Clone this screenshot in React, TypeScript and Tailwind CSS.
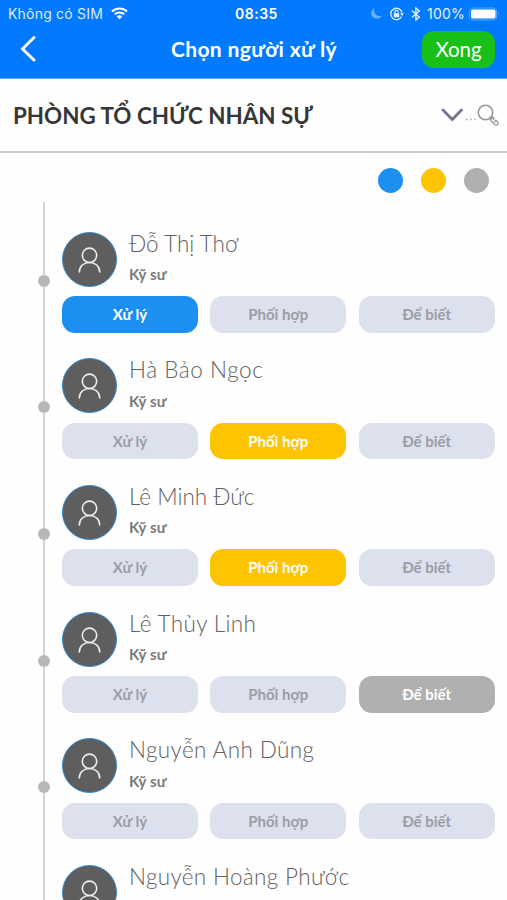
type Role = 'process' | 'combine' | 'notify';

interface Person {
  name: string;
  title?: string;
  role?: Role;
  spacing: string;
}

const people: Person[] = [
  { name: 'Đỗ Thị Thơ', title: 'Kỹ sư', role: 'process', spacing: 'tracking-[0px]' },
  { name: 'Hà Bảo Ngọc', title: 'Kỹ sư', role: 'combine', spacing: 'tracking-[0.55px]' },
  { name: 'Lê Minh Đức', title: 'Kỹ sư', role: 'combine', spacing: 'tracking-[0px]' },
  { name: 'Lê Thùy Linh', title: 'Kỹ sư', role: 'notify', spacing: 'tracking-[0.35px]' },
  { name: 'Nguyễn Anh Dũng', title: 'Kỹ sư', spacing: 'tracking-[0.38px]' },
  { name: 'Nguyễn Hoàng Phước', spacing: 'tracking-[0.33px]' },
];

const options: { id: Role; label: string; active: string }[] = [
  { id: 'process', label: 'Xử lý', active: 'bg-[#1d8ff0] text-white' },
  { id: 'combine', label: 'Phối hợp', active: 'bg-[#fec400] text-white' },
  { id: 'notify', label: 'Để biết', active: 'bg-[#b0b0b0] text-white' },
];

function StatusBar() {
  return (
    <div className="flex h-[27px] items-center text-[14px] leading-none font-['Inter','Noto_Sans',sans-serif]">
      <div className="flex w-[235px] items-center pl-[8px]">
        <span className="w-[96px] whitespace-nowrap text-[14px] tracking-[0.2px] text-[#d8ecff]">Không có SIM</span>
        <svg className="ml-[7px]" width="17" height="13" viewBox="0 0 17 13" fill="none" stroke="#fff" strokeWidth="2.1">
          <path d="M1 4.5C5.2.5 11.8.5 16 4.5M3.8 7.3C6.5 4.8 10.5 4.8 13.2 7.3" />
          <path d="M8.5 12.2L5.7 9.4c1.6-1.5 4-1.5 5.6 0z" fill="#fff" stroke="none" />
        </svg>
      </div>
      <span className="w-[135px] text-[14px] font-semibold tracking-[0.5px]">08:35</span>
      <svg width="13" height="13" viewBox="0 0 13 13" fill="#67b2ff">
        <path d="M4.5 1C1 3 .3 7 2.5 9.7c2.3 2.6 7 2.5 9-.8C7 10 2.800 6 4.500 1z" />
      </svg>
      <svg className="ml-[6px]" width="16" height="14" viewBox="0 0 16 14" fill="none" stroke="#e3f2ff">
        <path d="M12.600 9.500A5.700 5.700 0 1 1 13 5.500" strokeWidth="1.300" />
        <path d="M11 6.300h4l-2 2.700z" fill="#e3f2ff" stroke="none" />
        <path d="M5.900 6.500V5a1.600 1.600 0 0 1 3.200 0v1.500" strokeWidth="1.100" />
        <rect x="4.800" y="6.300" width="5.400" height="3.900" rx=".5" fill="#e3f2ff" stroke="none" />
      </svg>
      <svg className="ml-[6px]" width="10" height="14" viewBox="0 0 10 14" fill="none" stroke="#e3f2ff" strokeWidth="1.400">
        <path d="M1 3.700l7.300 6.300L4.900 13V1l3.400 3L1 10.300" />
      </svg>
      <span className="ml-[6px] w-[39px] whitespace-nowrap text-[14px] tracking-[0.2px] text-[#e3f2ff]">100%</span>
      <svg className="ml-[3px]" width="31" height="14" viewBox="0 0 31 14">
        <rect x=".6" y="1" width="27" height="12" rx="3" fill="none" stroke="#55a8ff" />
        <rect x="2" y="2.500" width="24.500" height="9" rx="1.700" fill="#fff" />
        <path d="M29 5q1.600 2 0 4z" fill="#55a8ff" />
      </svg>
    </div>
  );
}

function Header() {
  return (
    <header className="h-[79px] border-b border-[#5aaefd] bg-[#027aff] text-white">
      <StatusBar />
      <div className="flex h-[44px] items-center">
        <svg className="ml-[20px]" width="17" height="28" viewBox="0 0 17 28" fill="none" stroke="#fff" strokeWidth="3" strokeLinecap="round" strokeLinejoin="round">
          <path d="M14 2.500L2.500 14 14 25" />
        </svg>
        <h1 className="ml-[134px] w-[251px] whitespace-nowrap text-[21px] font-bold tracking-[0.35px]">Chọn người xử lý</h1>
        <button className="h-[37px] w-[73px] rounded-[12px] bg-[#18c018] text-[20.5px]">Xong</button>
      </div>
    </header>
  );
}

function Department() {
  return (
    <section className="flex h-[74px] items-center border-b-2 border-[#cecece] pl-[13px]">
      <h2 className="w-[428px] whitespace-nowrap pt-[2px] text-[22.4px] font-bold text-[#363636]">PHÒNG TỔ CHỨC NHÂN SỰ</h2>
      <svg width="22" height="14" viewBox="0 0 22 14" fill="none" stroke="#75718f" strokeWidth="2.700" strokeLinecap="round">
        <path d="M2 2l9.300 9.500L20.500 2" />
      </svg>
      <svg className="ml-[1px]" width="37" height="25" viewBox="0 0 37 25" fill="none" stroke="#999">
        <path d="M2 16.500h12" strokeWidth="1.300" strokeDasharray="1.300 2.900" />
        <circle cx="21.500" cy="9.500" r="7.200" strokeWidth="1.600" />
        <path d="M26.600 14.600l1.600 1.500M28.500 13.800l-1.800 2.200q-.6.800.1 1.500l4.200 4q1.300 1 2.500-.1t.2-2.500l-1.700-1.600-1.700 1.700M28.500 13.800l1.500 1.500-1.200 1.500" strokeWidth="1.400" />
      </svg>
    </section>
  );
}

function Avatar() {
  return (
    <div className="flex size-[55px] shrink-0 items-center justify-center rounded-full border-[1.5px] border-[#2f87d0] bg-[#5e5e5e]">
      <svg className="mt-[1px]" width="23" height="26" viewBox="0 0 23 26" fill="none" stroke="#eee" strokeWidth="1.600" strokeLinecap="round">
        <circle cx="11.500" cy="8.300" r="7.200" />
        <path d="M1.300 25C1.300 19 6 15.500 11.500 15.500S21.700 19 21.700 25" />
      </svg>
    </div>
  );
}

function PersonRow({ person }: { person: Person }) {
  return (
    <li className="flex h-[126.7px] shrink-0">
      <div className="flex w-[62px] shrink-0 flex-col items-end pr-[12.500px]">
        <div className="flex h-full w-[12px] flex-col items-center">
          <div className="h-[48.500px] w-[2px] bg-[#d4d4d4]" />
          <div className="size-[12px] shrink-0 rounded-full bg-[#b7b7b7]" />
          <div className="w-[2px] grow bg-[#d4d4d4]" />
        </div>
      </div>
      <div className="pt-[5.500px]">
        <div className="flex h-[55px]">
          <Avatar />
          <div className="ml-[12px] whitespace-nowrap">
            <p className={`h-[26px] text-[22.5px] leading-[24px] font-light text-[#626262] ${person.spacing}`}>{person.name}</p>
            {person.title && (
              <p className="mt-[6.500px] text-[15px] leading-[20px] font-bold tracking-[0.1px] text-[#7a7a7a]">{person.title}</p>
            )}
          </div>
        </div>
        {person.title && (
          <div className="mt-[9.500px] flex gap-[12.300px]">
            {options.map((option) => (
              <button
                key={option.id}
                className={`h-[36.500px] w-[136px] rounded-[13px] text-[15px] font-bold ${
                  person.role === option.id ? option.active : 'bg-[#dde1ed] text-[#9b9da6]'
                }`}
              >
                {option.label}
              </button>
            ))}
          </div>
        )}
      </div>
    </li>
  );
}

export default function App() {
  return (
    <main className="h-[900px] w-[507px] overflow-hidden bg-[#fefefe] font-['Lato','Noto_Sans',sans-serif]">
      <Header />
      <Department />
      <div className="flex h-[49px] items-center justify-end gap-[18px] pt-[5px] pr-[18px]">
        <span className="size-[25px] rounded-full bg-[#1d8ff0]" />
        <span className="size-[25px] rounded-full bg-[#fec400]" />
        <span className="size-[25px] rounded-full bg-[#b0b0b0]" />
      </div>
      <div className="ml-[43px] h-[24px] w-[1.500px] bg-[#d4d4d4]" />
      <ul>
        {people.map((person) => (
          <PersonRow key={person.name} person={person} />
        ))}
      </ul>
    </main>
  );
}
